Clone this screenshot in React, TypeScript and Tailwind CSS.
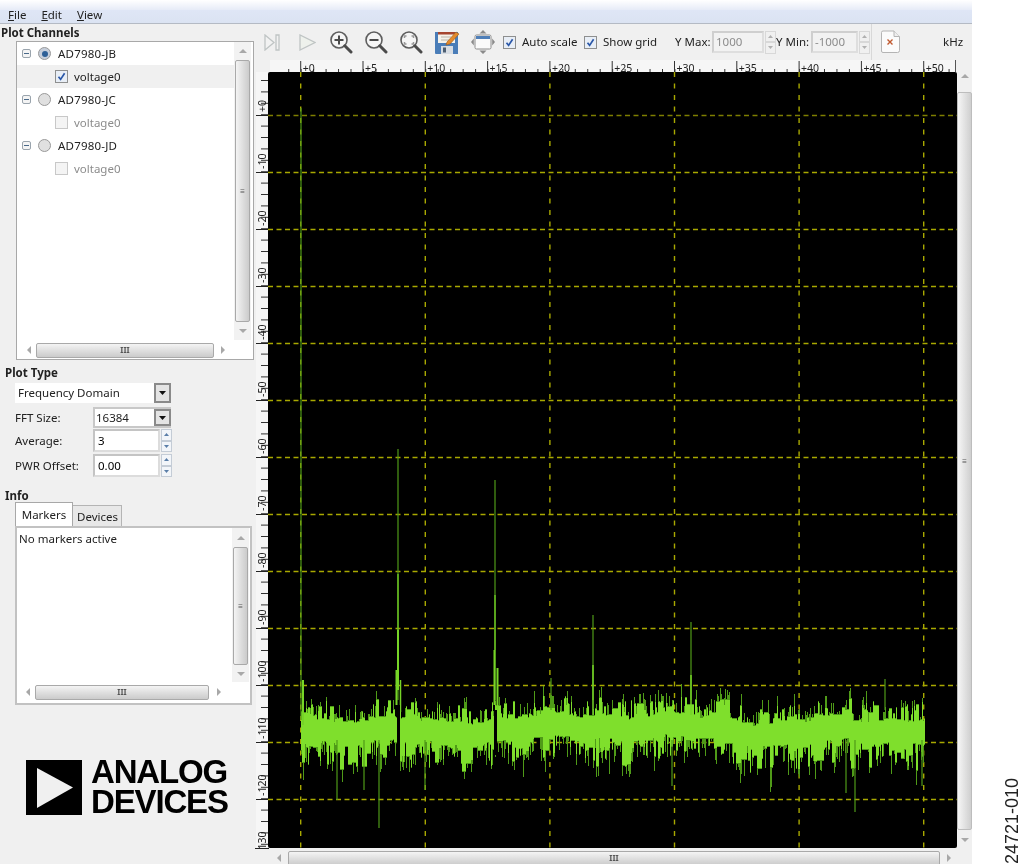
import React from "react";

// deterministic noise so the trace looks the same on every load
let seed = 24721;
function rnd() {
  seed = (seed * 1664525 + 1013904223) % 4294967296;
  return seed / 4294967296;
}

function buildTrace() {
  let bright = "";
  let dark = "";
  let up = 712;
  let down = 750;
  for (let x = 301; x <= 924; x++) {
    // slow wobble of the noise floor
    const wobble = Math.sin(x / 23) * 3 + Math.sin(x / 61 + 1) * 3 + Math.sin(x / 9) * 2;
    // values hold for a couple of columns, which gives the chunky edge
    if (rnd() < 0.5) {
      const r = rnd();
      up = 717 + wobble - r * r * 19 + rnd() * 3;
    }
    if (rnd() < 0.5) {
      const r = rnd();
      down = 742 + wobble + r * r * 26 - rnd() * 3;
    }
    bright += `M${x} ${up.toFixed(1)}V${down.toFixed(1)}`;
    const a = rnd();
    const b = rnd();
    const darkUp = a > 0.68 ? up - 3 - rnd() * 10 : up - 1;
    const darkDown = b > 0.6 ? down + 3 + b * b * rnd() * 24 : down + 1;
    dark += `M${x} ${darkUp.toFixed(1)}V${darkDown.toFixed(1)}`;
  }
  return { bright, dark };
}

const trace = buildTrace();
const gridX = [300.7, 425.3, 549.9, 674.5, 799.1, 923.7];
const gridY = Array.from({ length: 13 }, (_, i) => 115 + i * 57);

const darkSpikes: [number, number, number][] = [
  [301, 108, 720],
  [398, 449, 700],
  [495, 480, 700],
  [593, 615, 700],
  [691, 622, 700],
  [551, 678, 710],
  [885, 679, 710],
  [379, 740, 828],
  [855, 740, 812],
  [337, 740, 800],
  [364, 740, 790],
  [425, 740, 790],
  [672, 740, 786],
  [846, 740, 793],
  [922, 740, 786],
];

const brightSpikes: [number, number, number, number][] = [
  [303, 680, 725, 2],
  [398, 574, 640, 1.2],
  [398, 630, 690, 2],
  [396.5, 670, 705, 2],
  [400.5, 680, 712, 1.5],
  [495, 595, 650, 1.2],
  [494.5, 650, 705, 2],
  [497.5, 668, 710, 2],
  [593, 665, 715, 1.5],
  [691, 675, 715, 1.5],
];

function Spectrum() {
  return (
    <svg
      width={702}
      height={790}
      viewBox="255 60 702 790"
      className="block shrink-0"
      fontFamily="'Noto Sans', sans-serif"
      fontSize={10.5}
      fill="#222"
    >
      <rect x={255} y={60} width={702} height={790} fill="#f0f0f0" />
      <rect x={270} y={60} width={686} height={12} fill="#f6f6f6" />
      <rect x={256} y={72} width={12} height={776} fill="#f6f6f6" />

      {/* top ruler */}
      {Array.from({ length: 56 }, (_, i) => {
        const x = 288.2 + i * 12.46;
        return <rect key={i} x={x} y={69} width={1} height={3} fill="#333" />;
      })}
      {Array.from({ length: 11 }, (_, i) => {
        const x = 300.7 + i * 62.3;
        return (
          <g key={i}>
            <rect x={x - 0.5} y={61} width={1} height={11} fill="#333" />
            <text x={x + 2} y={72}>{`+${i * 5}`}</text>
          </g>
        );
      })}
      <rect x={955} y={59} width={1} height={13} fill="#555" />

      {/* left ruler */}
      {Array.from({ length: 68 }, (_, i) => {
        const y = 80 + i * 11.4;
        return <rect key={i} x={261} y={y} width={7} height={1} fill="#333" />;
      })}
      {gridY.concat(856).map((y, i) => (
        <g key={y}>
          <rect x={256} y={y} width={12} height={1} fill="#222" />
          <text transform={`translate(266 ${y - 3}) rotate(-90)`}>{i === 0 ? "+0" : `-${i * 10}`}</text>
        </g>
      ))}
      <rect x={255} y={848} width={14} height={1} fill="#222" />

      <rect x={268} y={72} width={689} height={776} rx={2} fill="#000" />

      {/* grid */}
      <g stroke="#a8a800" strokeWidth={1.4}>
        {gridY.map((y) => (
          <line key={y} x1={268} x2={957} y1={y + 0.5} y2={y + 0.5} strokeDasharray="5 3.5" opacity={y === 115 ? 0.75 : 1} />
        ))}
        {gridX.map((x) => (
          <line key={x} x1={x} x2={x} y1={72} y2={848} strokeDasharray="5 6.5" />
        ))}
      </g>

      {/* trace */}
      <path d={trace.dark} stroke="#4f9a18" strokeWidth={1} fill="none" shapeRendering="crispEdges" />
      <path d={trace.bright} stroke="#7fdf2c" strokeWidth={1} fill="none" shapeRendering="crispEdges" />
      {darkSpikes.map(([x, y1, y2]) => (
        <line key={`${x}-${y1}`} x1={x} x2={x} y1={y1} y2={y2} stroke="#4f9a18" strokeWidth={1.2} />
      ))}
      {brightSpikes.map(([x, y1, y2, w]) => (
        <line key={`${x}-${y1}`} x1={x} x2={x} y1={y1} y2={y2} stroke="#76d427" strokeWidth={w} />
      ))}
      <rect x={397} y={705} width={3} height={52} fill="#000" />
      <rect x={494} y={710} width={3} height={45} fill="#000" />
    </svg>
  );
}

function Arrow({ dir }: { dir: "up" | "down" | "left" | "right" }) {
  const pts = {
    up: "0,5 4,1 8,5",
    down: "0,1 4,5 8,1",
    left: "5,0 1,4 5,8",
    right: "1,0 5,4 1,8",
  }[dir];
  const vertical = dir === "up" || dir === "down";
  return (
    <svg width={vertical ? 8 : 6} height={vertical ? 6 : 8} className="block shrink-0">
      <polygon points={pts} fill="#a8a8a8" />
    </svg>
  );
}

function HScroll({ before, thumb, after }: { before: number; thumb: number; after: number }) {
  return (
    <div className="flex items-center h-[16px]">
      <div className="flex items-center justify-center" style={{ width: before }}>
        <Arrow dir="left" />
      </div>
      <div
        className="h-[15px] rounded-[2px] border border-[#a9a9a9] bg-gradient-to-b from-[#f4f4f4] to-[#cbcbcb] flex items-center justify-center text-[8px] leading-none text-[#555] font-bold"
        style={{ width: thumb }}
      >
        III
      </div>
      <div className="flex items-center justify-center" style={{ width: after }}>
        <Arrow dir="right" />
      </div>
    </div>
  );
}

function VScroll({ before, thumb, after }: { before: number; thumb: number; after: number }) {
  return (
    <div className="flex flex-col items-center w-[17px] bg-[#f2f2f2]">
      <div className="flex items-center justify-center" style={{ height: before }}>
        <Arrow dir="up" />
      </div>
      <div
        className="w-[15px] rounded-[2px] border border-[#a9a9a9] bg-gradient-to-r from-[#f4f4f4] to-[#cbcbcb] flex items-center justify-center text-[8px] leading-none text-[#555] font-bold"
        style={{ height: thumb }}
      >
        ≡
      </div>
      <div className="flex items-center justify-center" style={{ height: after }}>
        <Arrow dir="down" />
      </div>
    </div>
  );
}

function Check({ on, dim }: { on?: boolean; dim?: boolean }) {
  return (
    <span
      className={`w-[13px] h-[13px] shrink-0 border flex items-center justify-center ${
        dim ? "border-[#c8c8c8] bg-[#f4f4f4]" : "border-[#8e8f8f] bg-[#e8eef6]"
      }`}
    >
      {on && (
        <svg width={9} height={9} viewBox="0 0 9 9">
          <path d="M1.5 4.8 3.6 7.4 7.6 1.2" fill="none" stroke="#2a57a8" strokeWidth={1.7} />
        </svg>
      )}
    </span>
  );
}

function ChannelRow({ name, on }: { name: string; on?: boolean }) {
  return (
    <div className="h-[23px] flex items-center pl-[5px]">
      <span className="w-[9px] h-[9px] border border-[#9aa4ad] rounded-[2px] bg-[#f4f4f4] flex items-center justify-center">
        <span className="w-[5px] h-px bg-[#4a6a8a]" />
      </span>
      <span
        className={`ml-[7px] w-[13px] h-[13px] rounded-full border border-[#9a9a9a] flex items-center justify-center ${
          on ? "bg-[#c6cedb]" : "bg-[#e0e0e0]"
        }`}
      >
        {on && <span className="w-[6px] h-[6px] rounded-full bg-[#2d5f97]" />}
      </span>
      <span className="ml-[7px] text-[#222] tracking-[0.2px]">{name}</span>
    </div>
  );
}

function VoltageRow({ active }: { active?: boolean }) {
  return (
    <div className={`h-[23px] flex items-center pl-[38px] ${active ? "bg-[#f0f0f0]" : ""}`}>
      <Check on={active} dim={!active} />
      <span className={`ml-[6px] ${active ? "text-[#222]" : "text-[#8c8c8c]"}`}>voltage0</span>
    </div>
  );
}

function ComboArrow() {
  return (
    <span className="ml-auto w-[17px] h-full border-2 border-[#8a8a8a] bg-[#e4e4e4] flex items-center justify-center">
      <svg width={7} height={4}>
        <polygon points="0,0 7,0 3.5,4" fill="#111" />
      </svg>
    </span>
  );
}

function SpinArrows({ disabled }: { disabled?: boolean }) {
  const cls = disabled ? "border-[#d8d8d8]" : "border-[#c4ccd6] bg-[#f2f5f9]";
  return (
    <div className="w-[11px] h-[23px] flex flex-col ml-[1px]">
      <span className={`flex-1 border flex items-center justify-center ${cls}`}>
        <svg width={5} height={3}>
          <polygon points="0,3 2.5,0 5,3" fill={disabled ? "#b0b0b0" : "#5a7ea8"} />
        </svg>
      </span>
      <span className={`flex-1 border flex items-center justify-center ${cls}`}>
        <svg width={5} height={3}>
          <polygon points="0,0 2.5,3 5,0" fill={disabled ? "#b0b0b0" : "#5a7ea8"} />
        </svg>
      </span>
    </div>
  );
}

function SpinField({ label, value }: { label: string; value: string }) {
  return (
    <div className="flex items-center h-[25px] pl-[15px]">
      <span className="w-[78px] text-[#222]">{label}</span>
      <span className="w-[67px] h-[23px] bg-white border-2 border-[#dcdcdc] border-t-[#c4c4c4] border-l-[#c4c4c4] flex items-center pl-[3px]">
        {value}
      </span>
      <SpinArrows />
    </div>
  );
}

function Magnifier({ kind }: { kind: "in" | "out" | "fit" }) {
  return (
    <svg width={24} height={24} viewBox="0 0 24 24" className="block shrink-0">
      <circle cx={10} cy={10} r={8} fill="#f6f6f6" stroke="#5e5e5e" strokeWidth={1.6} />
      <path d="M15.8 15.8 22 22" stroke="#4a4a4a" strokeWidth={3} strokeLinecap="round" />
      {kind !== "fit" && <path d="M5.5 10h9" stroke="#4a4a4a" strokeWidth={2} />}
      {kind === "in" && <path d="M10 5.5v9" stroke="#4a4a4a" strokeWidth={2} />}
      {kind === "fit" && (
        <path
          d="M5.5 8V6h2M12.5 6h2v2M14.5 12v2h-2M7.5 14h-2v-2"
          fill="none"
          stroke="#999"
          strokeWidth={1.5}
        />
      )}
    </svg>
  );
}

function FloppyIcon() {
  return (
    <svg width={25} height={24} viewBox="0 0 25 24" className="block shrink-0">
      <path d="M0 2h23v22H1a1 1 0 0 1-1-1z" fill="#4a7db8" />
      <rect x={3} y={2} width={17} height={11} fill="#f5f2ea" />
      <rect x={3} y={2} width={17} height={2.5} fill="#a5452f" />
      <path d="M6 7h10M6 10h8" stroke="#b9b4aa" strokeWidth={1} />
      <rect x={6} y={16} width={12} height={8} fill="#d8dde3" />
      <rect x={8} y={17.5} width={3} height={5} fill="#4d5f73" />
      <path d="M12 12 21 2l3 2-9 10-4 1z" fill="#e48a2c" stroke="#9c5a17" strokeWidth={0.6} />
    </svg>
  );
}

function ResizeIcon() {
  return (
    <svg width={24} height={24} viewBox="0 0 24 24" className="block shrink-0">
      <rect x={4} y={5} width={16} height={14} rx={1.5} fill="#fafafa" stroke="#8c8c8c" />
      <rect x={5} y={6} width={14} height={3} fill="#4f7fb8" />
      <path d="M8.5 3.5 12 0l3.5 3.5zM8.5 20.5 12 24l3.5-3.5zM2.8 8.5 0 12l2.8 3.5zM21.2 8.5 24 12l-2.8 3.5z" fill="#8a8a8a" />
    </svg>
  );
}

function DocIcon() {
  return (
    <svg width={21} height={24} viewBox="0 0 21 24" className="block shrink-0">
      <path d="M1.5 2.5a1.5 1.5 0 0 1 1.5-1.5h11l5.5 5.5v14a2 2 0 0 1-2 2H3a1.5 1.5 0 0 1-1.5-1.5z" fill="#fbfbfb" stroke="#b4b4b4" />
      <path d="M14 1v5.5h5.5" fill="#eee" stroke="#b4b4b4" />
      <path d="M7.5 9.5l5 5M12.5 9.5l-5 5" stroke="#c0582e" strokeWidth={1.4} />
    </svg>
  );
}

function Toolbar() {
  return (
    <div className="h-[36px] flex items-center pl-[9px] whitespace-nowrap">
      <svg width={16} height={17} viewBox="0 0 16 17" className="block shrink-0">
        <path d="M1 1v15l9-7.5zM12 1h3v15h-3z" fill="#f2f2f2" stroke="#bfc4c4" strokeWidth={1.3} />
      </svg>
      <svg width={17} height={17} viewBox="0 0 17 17" className="block shrink-0 ml-[19px]">
        <path d="M1 1v15l15-7.5z" fill="#eef1ec" stroke="#bfc4c4" strokeWidth={1.3} />
      </svg>
      <span className="ml-[13px]">
        <Magnifier kind="in" />
      </span>
      <span className="ml-[11px]">
        <Magnifier kind="out" />
      </span>
      <span className="ml-[11px]">
        <Magnifier kind="fit" />
      </span>
      <span className="ml-[12px]">
        <FloppyIcon />
      </span>
      <span className="ml-[11px]">
        <ResizeIcon />
      </span>
      <span className="ml-[8px]">
        <Check on />
      </span>
      <span className="ml-[6px] text-[#222] w-[62px]">Auto scale</span>
      <Check on />
      <span className="ml-[6px] text-[#222] w-[72px]">Show grid</span>
      <span className="text-[#222] w-[37px]">Y Max:</span>
      <span className="w-[52px] h-[22px] border-2 border-[#dedede] border-t-[#cfcfcf] border-l-[#cfcfcf] bg-[#f2f2f2] text-[#8c8c8c] flex items-center pl-[2px]">
        1000
      </span>
      <SpinArrows disabled />
      <span className="text-[#222] w-[35px]">Y Min:</span>
      <span className="w-[47px] h-[22px] border-2 border-[#dedede] border-t-[#cfcfcf] border-l-[#cfcfcf] bg-[#f2f2f2] text-[#8c8c8c] flex items-center pl-[2px]">
        -1000
      </span>
      <SpinArrows disabled />
      <span className="ml-[1px] w-px h-[36px] bg-[#d8d8d8]" />
      <span className="ml-[8px]">
        <DocIcon />
      </span>
      <span className="ml-[42px] text-[#222]">kHz</span>
    </div>
  );
}

function SidePanel() {
  return (
    <div className="w-[255px] shrink-0 flex flex-col">
      <div className="h-[17px] pl-[1px] flex items-center font-bold text-[#222]">Plot Channels</div>

      <div className="ml-[16px] w-[238px] h-[319px] border border-[#a8a8a8] bg-white flex">
        <div className="w-[217px] flex flex-col">
          <div className="h-[300px]">
            <ChannelRow name="AD7980-JB" on />
            <VoltageRow active />
            <ChannelRow name="AD7980-JC" />
            <VoltageRow />
            <ChannelRow name="AD7980-JD" />
            <VoltageRow />
          </div>
          <div className="h-[17px] pl-[5px]">
            <HScroll before={14} thumb={178} after={18} />
          </div>
        </div>
        <div className="h-[300px]">
          <VScroll before={18} thumb={262} after={18} />
        </div>
      </div>

      <div className="h-[25px] pl-[5px] flex items-center font-bold text-[#222]">Plot Type</div>
      <div className="-mt-[2px] ml-[15px] w-[156px] h-[20px] bg-white flex items-center pl-[3px] text-[#222]">
        Frequency Domain
        <ComboArrow />
      </div>
      <div className="flex items-center h-[21px] mt-[4px] pl-[15px]">
        <span className="w-[78px] text-[#222]">FFT Size:</span>
        <span className="w-[78px] h-full bg-white border-2 border-r-0 border-[#c8c8c8] flex items-center pl-[1px] text-[#222]">
          16384
          <ComboArrow />
        </span>
      </div>
      <div>
        <SpinField label="Average:" value="3" />
        <SpinField label="PWR Offset:" value="0.00" />
      </div>

      <div className="h-[19px] mt-[5px] pl-[5px] pb-px flex items-end font-bold text-[#222]">Info</div>
      <div className="ml-[15px] h-[25px] flex items-end">
        <span className="w-[58px] h-[25px] bg-white border border-b-0 border-[#a8a8a8] flex items-center justify-center pb-[1px] text-[#222]">
          Markers
        </span>
        <span className="w-[49px] h-[22px] bg-[#e8e8e8] border border-b-0 border-l-0 border-[#b4b4b4] overflow-hidden flex items-center pl-[4px] text-[#222]">
          Devices
        </span>
      </div>
      <div className="ml-[15px] w-[237px] h-[179px] border-2 border-[#c2c2c2] bg-white flex -mt-px">
        <div className="flex-1 flex flex-col">
          <div className="h-[156px] pl-[2px] pt-[5px] text-[#222]">No markers active</div>
          <div className="pl-[3px]">
            <HScroll before={15} thumb={174} after={20} />
          </div>
        </div>
        <div className="h-[154px] mr-[1px]">
          <VScroll before={19} thumb={118} after={17} />
        </div>
      </div>

      <div className="ml-[26px] mt-[55px] flex items-start">
        <svg width={56} height={55} viewBox="0 0 56 55" className="block shrink-0">
          <rect width={56} height={55} fill="#000" />
          <polygon points="11,8 47,27.5 11,48" fill="#f0f0f0" />
        </svg>
        <div className="ml-[9px] font-['Liberation_Sans',sans-serif] font-bold text-[33px] leading-[30px] tracking-[-1.15px] text-black -mt-[3px]">
          <div>ANALOG</div>
          <div>DEVICES</div>
        </div>
      </div>
    </div>
  );
}

export default function App() {
  return (
    <div className="relative w-[1024px] h-[864px] overflow-hidden bg-white font-['Noto_Sans',sans-serif] text-[11.5px] leading-none blur-[0.35px]">
      <div className="w-[972px] h-full flex flex-col bg-[#f0f0f0]">
        <div className="h-[10px] bg-gradient-to-b from-white to-[#e6ebf7]" />
        <div className="h-[14px] shrink-0 bg-gradient-to-b from-[#dfe6f6] to-[#dbe3f2] border-b border-[#b4bac4] flex items-center pl-[8px] pb-[4px] gap-[15px] text-[#222]">
          <span>
            <u>F</u>ile
          </span>
          <span>
            <u>E</u>dit
          </span>
          <span>
            <u>V</u>iew
          </span>
        </div>
        <div className="flex flex-1 min-h-0">
          <SidePanel />
          <div className="flex-1 flex flex-col min-w-0">
            <Toolbar />
            <div className="flex h-[790px]">
              <Spectrum />
              <div className="w-[15px] flex flex-col items-center">
                <div className="h-[32px] flex items-center justify-center">
                  <Arrow dir="up" />
                </div>
                <div className="w-[15px] h-[738px] rounded-[2px] border border-[#bdbdbd] bg-gradient-to-r from-[#f6f6f6] to-[#cfcfcf] flex items-center justify-center text-[8px] text-[#555] font-bold">
                  ≡
                </div>
                <div className="h-[20px] flex items-center justify-center">
                  <Arrow dir="down" />
                </div>
              </div>
            </div>
            <div className="ml-[15px] h-[14px]">
              <HScroll before={18} thumb={652} after={17} />
            </div>
          </div>
        </div>
      </div>
      <span className="absolute right-[3px] bottom-0 rotate-180 [writing-mode:vertical-rl] whitespace-nowrap font-['Liberation_Sans',sans-serif] text-[18px] leading-[18px] text-[#222]">
        24721-010
      </span>
    </div>
  );
}
